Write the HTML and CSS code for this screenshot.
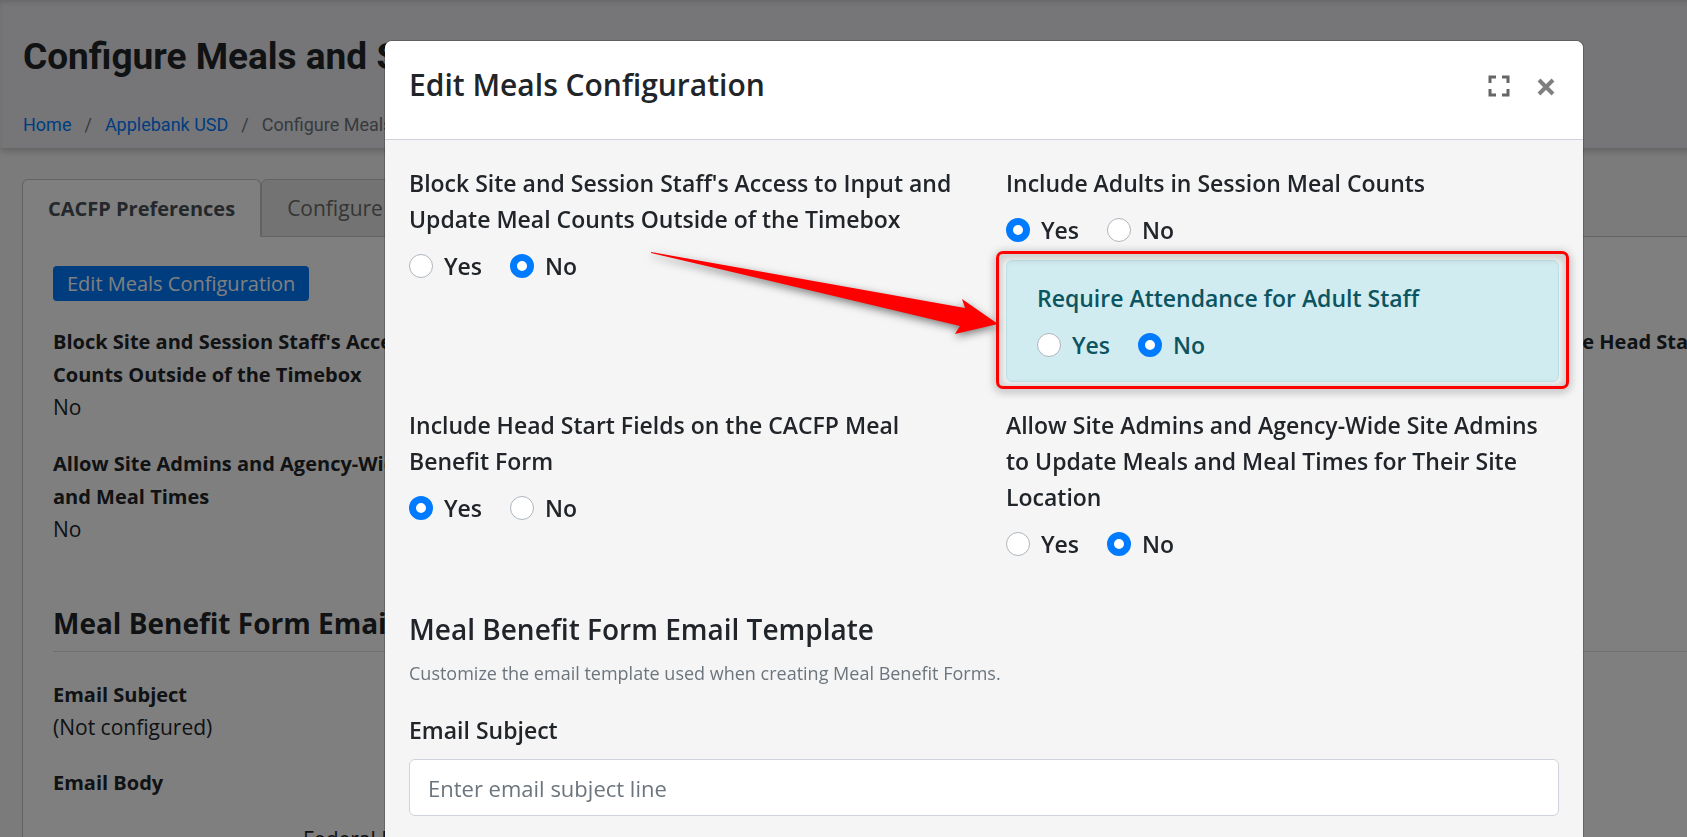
FILE: index.html
```html
<!DOCTYPE html>
<html lang="en">
<head>
    <meta charset="UTF-8">
    <meta name="viewport" content="width=device-width, initial-scale=1.0">
    <title>Configure Meals and Snacks</title>
    <link rel="stylesheet" href="styles.css">
</head>
<body>
    <div class="page">
        <header class="page-header">
            <h1>Configure Meals and Snacks</h1>
            <nav class="breadcrumb">
                <a href="#">Home</a>
                <span class="slash">/</span>
                <a href="#">Applebank USD</a>
                <span class="slash">/</span>
                <span>Configure Meals and Snacks</span>
            </nav>
        </header>

        <main class="content">
            <div class="tabs">
                <button class="tab active">CACFP Preferences</button>
                <button class="tab">Configure Meals</button>
            </div>
            <div class="card">
                <button class="btn">Edit Meals Configuration</button>

                <dl class="prefs">
                    <div>
                        <dt>Block Site and Session Staff's Access to Input and Update Meal<br>Counts Outside of the Timebox</dt>
                        <dd>No</dd>
                    </div>
                    <div class="third">
                        <dt>Include Head Start Fields</dt>
                    </div>
                    <div>
                        <dt>Allow Site Admins and Agency-Wide Site Admins to Update Meals<br>and Meal Times</dt>
                        <dd>No</dd>
                    </div>
                </dl>

                <h2>Meal Benefit Form Email Template</h2>
                <dl class="email">
                    <dt>Email Subject</dt>
                    <dd>(Not configured)</dd>
                    <dt>Email Body</dt>
                </dl>
                <p class="email-body">Federal Programs</p>
            </div>
        </main>
    </div>

    <div class="overlay">
        <div class="modal" role="dialog" aria-labelledby="modalTitle">
            <div class="modal-header">
                <h2 id="modalTitle">Edit Meals Configuration</h2>
                <div class="modal-tools">
                    <button class="icon-btn" aria-label="Full screen">
                        <svg width="22" height="22" viewBox="0 0 22 22"><path d="M2 8V2h6M14 2h6v6M20 14v6h-6M8 20H2v-6" fill="none" stroke="#666" stroke-width="3"/></svg>
                    </button>
                    <button class="icon-btn" aria-label="Close">
                        <svg width="22" height="22" viewBox="0 0 22 22"><path d="M4 5l14 14M18 5L4 19" fill="none" stroke="#7f7f7f" stroke-width="4"/></svg>
                    </button>
                </div>
            </div>

            <form class="modal-body">
                <div class="fields">
                    <fieldset>
                        <legend>Block Site and Session Staff's Access to Input and Update Meal Counts Outside of the Timebox</legend>
                        <div class="choices">
                            <label><input type="radio" name="block"> Yes</label>
                            <label><input type="radio" name="block" checked> No</label>
                        </div>
                    </fieldset>

                    <div>
                        <fieldset>
                            <legend>Include Adults in Session Meal Counts</legend>
                            <div class="choices">
                                <label><input type="radio" name="adults" checked> Yes</label>
                                <label><input type="radio" name="adults"> No</label>
                            </div>
                        </fieldset>
                        <div class="alert">
                            <fieldset>
                                <legend>Require Attendance for Adult Staff</legend>
                                <div class="choices">
                                    <label><input type="radio" name="attendance"> Yes</label>
                                    <label><input type="radio" name="attendance" checked> No</label>
                                </div>
                            </fieldset>
                            <div class="callout"></div>
                            <svg class="arrow" width="347" height="84" viewBox="0 0 347 84"><path d="M0 0L314 56L311 47L347 72L304 82L309 74Q150 36 0 1z" fill="#f00"/></svg>
                        </div>
                    </div>

                    <fieldset>
                        <legend>Include Head Start Fields on the CACFP Meal Benefit Form</legend>
                        <div class="choices">
                            <label><input type="radio" name="headstart" checked> Yes</label>
                            <label><input type="radio" name="headstart"> No</label>
                        </div>
                    </fieldset>

                    <fieldset>
                        <legend>Allow Site Admins and Agency-Wide Site Admins to Update Meals and Meal Times for Their Site Location</legend>
                        <div class="choices">
                            <label><input type="radio" name="siteadmins"> Yes</label>
                            <label><input type="radio" name="siteadmins" checked> No</label>
                        </div>
                    </fieldset>
                </div>

                <h3>Meal Benefit Form Email Template</h3>
                <p class="hint">Customize the email template used when creating Meal Benefit Forms.</p>
                <label class="field-label" for="subject">Email Subject</label>
                <input class="text-input" type="text" id="subject" placeholder="Enter email subject line">
            </form>
        </div>
    </div>
</body>
</html>
```
FILE: styles.css
```css
* {
    box-sizing: border-box;
}

body {
    margin: 0;
    height: 100vh;
    overflow: hidden;
    background-color: #f6f6f6;
    color: #212529;
    font-family: "Open Sans", sans-serif;
    font-size: 21px;
    line-height: 32px;
}

h1, h2, h3, p, dl, dd {
    margin: 0;
}

button, input {
    font-family: inherit;
}

/* Page behind the dialog, wider than the window */
.page {
    min-width: 2307px;
}

.page-header {
    padding: 32px 23px 8px;
    height: 148px;
    background-color: #ededf0;
    box-shadow: 0 2px 8px rgba(0, 0, 0, 0.25), inset 0 4px 6px -2px rgba(0, 0, 0, 0.15);
    font-family: Roboto, sans-serif;
}

.page-header h1 {
    margin-bottom: 28px;
    font-size: 37px;
    line-height: 50px;
    font-weight: 700;
}

.breadcrumb {
    display: flex;
    gap: 13px;
    font-size: 18px;
    line-height: 30px;
    color: #6c757d;
}

.breadcrumb a {
    color: #007bff;
    text-decoration: none;
}

.content {
    padding: 31px 22px;
}

.tabs {
    display: flex;
}

.tab {
    margin-bottom: -1px;
    padding: 0 25px;
    height: 58px;
    border: 1px solid #c4c4c4;
    border-radius: 6px 6px 0 0;
    background-color: #e6e6e6;
    color: #6c6c6c;
    font-size: 21px;
}

.tab.active {
    position: relative;
    border-bottom-color: #fff;
    background-color: #fff;
    color: #495057;
    font-size: 20px;
    font-weight: 700;
}

.card {
    padding: 29px 30px;
    border: 1px solid #c4c4c4;
    background-color: #fff;
}

.btn {
    display: block;
    margin-bottom: 24px;
    padding: 0 14px;
    height: 35px;
    border: none;
    border-radius: 4px;
    background-color: #007bff;
    color: #fff;
    font-size: 20px;
}

.prefs {
    display: grid;
    grid-template-columns: repeat(3, 1fr);
    row-gap: 24px;
}

.prefs .third {
    grid-column: 3;
}

dt {
    font-size: 20px;
    line-height: 33px;
    font-weight: 700;
}

.card h2 {
    margin: 58px 0 26px;
    padding-bottom: 8px;
    border-bottom: 1px solid #e0e0e0;
    font-size: 28px;
    line-height: 40px;
}

.email dd {
    margin-bottom: 23px;
}

.email-body {
    padding: 24px 250px;
}

/* Dialog */
.overlay {
    position: fixed;
    inset: 0;
    display: flex;
    justify-content: center;
    padding: 40px 0 0 281px;
    background-color: rgba(0, 0, 0, 0.5);
    overflow: hidden;
}

.modal {
    flex: 0 1 1200px;
    align-self: flex-start;
    min-height: 100%;
    border: 1px solid rgba(0, 0, 0, 0.2);
    border-bottom: none;
    border-radius: 8px 8px 0 0;
    background-color: #f5f5f5;
    background-clip: padding-box;
}

.modal-header {
    display: flex;
    justify-content: space-between;
    align-items: flex-start;
    padding: 23px 24px;
    height: 99px;
    border-bottom: 1px solid #ced4da;
    border-radius: 7px 7px 0 0;
    background-color: #fff;
}

.modal-header h2,
.modal-body h3 {
    font-size: 28px;
    line-height: 42px;
    font-weight: 600;
}

.modal-header h2 {
    font-size: 30px;
}

.modal-tools {
    display: flex;
    gap: 25px;
    padding: 11px 2px;
}

.icon-btn {
    display: flex;
    padding: 0;
    border: none;
    background: none;
}

.modal-body {
    padding: 25px 24px 16px;
}

.fields {
    display: grid;
    grid-template-columns: 1fr 1fr;
    gap: 25px 44px;
}

fieldset {
    margin: 0;
    padding: 0;
    border: none;
}

legend {
    padding: 0;
}

legend,
.choices,
.field-label {
    font-size: 23px;
    line-height: 36px;
    font-weight: 600;
}

.choices {
    display: flex;
    gap: 28px;
    padding-top: 11px;
}

.choices label {
    display: flex;
    align-items: center;
    gap: 11px;
}

.choices input {
    appearance: none;
    margin: 0;
    width: 24px;
    height: 24px;
    border: 1px solid #adb5bd;
    border-radius: 50%;
    background-color: #fff;
}

.choices input:checked {
    border: 7px solid #007bff;
}

.alert {
    position: relative;
    margin-top: 12px;
    padding: 19px 30px 18px;
    border: 1px solid #bee5eb;
    border-radius: 6px;
    background-color: #d1ecf1;
    color: #0c5460;
}

/* Red frame and arrow pointing at the alert */
.callout {
    position: absolute;
    inset: -10px -11px -8px;
    border: 3px solid #f00;
    border-radius: 7px;
    filter: drop-shadow(0 2px 4px rgba(0, 0, 0, 0.5));
    pointer-events: none;
}

.arrow {
    position: absolute;
    top: -9px;
    right: calc(100% + 9px);
    overflow: visible;
    filter: drop-shadow(0 3px 4px rgba(0, 0, 0, 0.5));
}

.modal-body h3 {
    margin: 46px 0 7px;
}

.hint {
    margin-bottom: 23px;
    color: #6c757d;
    font-size: 18px;
}

.field-label {
    display: block;
    margin-bottom: 11px;
}

.text-input {
    display: block;
    width: 100%;
    height: 57px;
    padding: 0 18px;
    border: 1px solid #ced4da;
    border-radius: 6px;
    background-color: #fff;
    font-size: 22px;
}

.text-input::placeholder {
    color: #6c757d;
}
```
